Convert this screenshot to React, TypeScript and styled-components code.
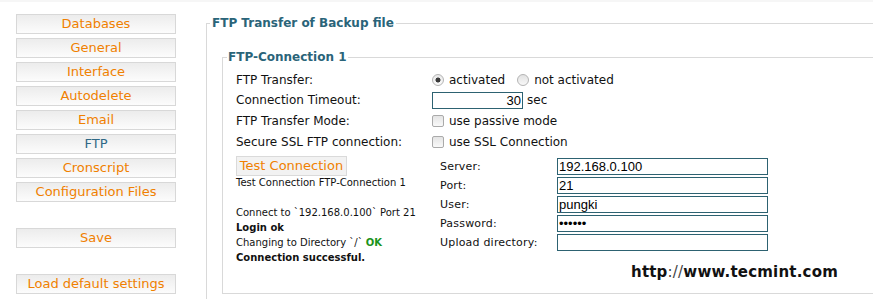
import React from "react";
import styled, { createGlobalStyle } from "styled-components";

const GlobalStyle = createGlobalStyle`
  html, body {
    margin: 0;
    padding: 0;
    background: #fff;
  }
  body {
    font-family: "DejaVu Sans", Verdana, sans-serif;
    color: #111;
  }
`;

const menuItems = [
  "Databases",
  "General",
  "Interface",
  "Autodelete",
  "Email",
  "FTP",
  "Cronscript",
  "Configuration Files",
];

function App() {
  return (
    <>
      <GlobalStyle />
      <Page>
        <Sidebar>
          {menuItems.map((item) => (
            <MenuButton key={item} $active={item === "FTP"}>
              {item}
            </MenuButton>
          ))}
          <MenuButton $spaced>Save</MenuButton>
          <MenuButton $spaced>Load default settings</MenuButton>
        </Sidebar>

        <Main>
          <OuterFieldset>
            <OuterLegend>FTP Transfer of Backup file</OuterLegend>
            <InnerFieldset>
              <InnerLegend>FTP-Connection 1</InnerLegend>

              <SettingsGrid>
                <FieldLabel>FTP Transfer:</FieldLabel>
                <FieldValue>
                  <Radio $checked />
                  <OptionText>activated</OptionText>
                  <Radio $spaced />
                  <OptionText>not activated</OptionText>
                </FieldValue>

                <FieldLabel>Connection Timeout:</FieldLabel>
                <FieldValue>
                  <TimeoutInput defaultValue="30" />
                  <Unit>sec</Unit>
                </FieldValue>

                <FieldLabel>FTP Transfer Mode:</FieldLabel>
                <FieldValue>
                  <Checkbox />
                  <OptionText>use passive mode</OptionText>
                </FieldValue>

                <FieldLabel>Secure SSL FTP connection:</FieldLabel>
                <FieldValue>
                  <Checkbox />
                  <OptionText>use SSL Connection</OptionText>
                </FieldValue>
              </SettingsGrid>

              <Lower>
                <TestColumn>
                  <TestButton>Test Connection</TestButton>
                  <TestCaption>Test Connection FTP-Connection 1</TestCaption>
                  <Log>
                    <LogLine>Connect to `192.168.0.100` Port 21</LogLine>
                    <LogLine $bold>Login ok</LogLine>
                    <LogLine>
                      Changing to Directory `/` <Ok>OK</Ok>
                    </LogLine>
                    <LogLine $bold>Connection successful.</LogLine>
                  </Log>
                </TestColumn>

                <ServerGrid>
                  <ServerLabel>Server:</ServerLabel>
                  <TextInput defaultValue="192.168.0.100" />
                  <ServerLabel>Port:</ServerLabel>
                  <TextInput defaultValue="21" />
                  <ServerLabel>User:</ServerLabel>
                  <TextInput defaultValue="pungki" />
                  <ServerLabel>Password:</ServerLabel>
                  <TextInput type="password" defaultValue="pungki" />
                  <ServerLabel>Upload directory:</ServerLabel>
                  <TextInput defaultValue="" />
                </ServerGrid>
              </Lower>
            </InnerFieldset>
          </OuterFieldset>
        </Main>

        <Watermark>
          http<Thin>://</Thin>www.tecmint.com
        </Watermark>
      </Page>
    </>
  );
}

const Page = styled.div`
  position: relative;
  display: flex;
  align-items: flex-start;
  width: 873px;
  height: 299px;
  overflow: hidden;
  border-top: 2px solid #f6f6f6;
  box-sizing: border-box;
`;

const Sidebar = styled.nav`
  display: flex;
  flex-direction: column;
  gap: 4px;
  width: 160px;
  padding: 12px 0 0 16px;
  flex-shrink: 0;
`;

const MenuButton = styled.button<{ $active?: boolean; $spaced?: boolean }>`
  display: block;
  width: 160px;
  height: 20px;
  box-sizing: border-box;
  margin: ${(p) => (p.$spaced ? "22px" : "0")} 0 0;
  padding: 0;
  border: 1px solid #d8d8d8;
  background: linear-gradient(#ececec, #fcfcfc);
  font-family: "DejaVu Sans", Verdana, sans-serif;
  font-size: 13px;
  line-height: 18px;
  text-align: center;
  color: ${(p) => (p.$active ? "#2f6886" : "#f08000")};
`;

const Main = styled.main`
  flex: 1;
  margin-left: 30px;
  padding-top: 13px;
`;

const OuterFieldset = styled.fieldset`
  margin: 0 -40px 0 0;
  padding: 0 0 20px 3px;
  border: 1px solid #d9d9d9;
  min-width: 0;
`;

const OuterLegend = styled.legend`
  padding: 0 2px;
  font-size: 12px;
  line-height: 17px;
  font-weight: bold;
  color: #2a6479;
`;

const InnerFieldset = styled.fieldset`
  margin: 17px 0 0 12px;
  padding: 4px 0 28px 13px;
  border: 1px solid #d9d9d9;
  min-width: 0;
`;

const InnerLegend = styled.legend`
  margin-left: -9px;
  padding: 0 1px;
  font-size: 12px;
  line-height: 17px;
  font-weight: bold;
  color: #2a6479;
`;

const SettingsGrid = styled.div`
  display: grid;
  grid-template-columns: 196px auto;
  grid-template-rows: 20px 20px 21px 22px;
  align-items: center;
  font-size: 12px;
`;

const FieldLabel = styled.div`
  color: #111;
`;

const FieldValue = styled.div`
  display: flex;
  align-items: center;
  color: #111;
`;

const Radio = styled.span<{ $checked?: boolean; $spaced?: boolean }>`
  width: 12px;
  height: 12px;
  box-sizing: border-box;
  margin-left: ${(p) => (p.$spaced ? "12px" : "0")};
  border-radius: 50%;
  border: 1px solid #b4b4b4;
  background: ${(p) =>
    p.$checked
      ? "radial-gradient(circle, #3a3a3a 0 2.2px, transparent 2.8px), linear-gradient(#e8e8e8, #fafafa)"
      : "linear-gradient(#e2e2e2, #f8f8f8)"};
`;

const Checkbox = styled.span`
  width: 12px;
  height: 12px;
  box-sizing: border-box;
  border-radius: 2px;
  border: 1px solid #aaa;
  background: linear-gradient(#e4e4e4, #f9f9f9);
`;

const OptionText = styled.span`
  margin-left: 5px;
`;

const TimeoutInput = styled.input`
  width: 91px;
  height: 17px;
  box-sizing: border-box;
  padding: 0 1px 0 0;
  border: 1px solid #2d6271;
  font-family: "Liberation Sans", Arial, sans-serif;
  font-size: 13px;
  text-align: right;
  color: #000;
  outline: none;
`;

const Unit = styled.span`
  margin-left: 4px;
`;

const Lower = styled.div`
  display: flex;
  margin-top: 3px;
`;

const TestColumn = styled.div`
  width: 204px;
  flex-shrink: 0;
`;

const TestButton = styled.button`
  display: block;
  width: 111px;
  height: 20px;
  box-sizing: border-box;
  padding: 0;
  border: 1px solid #dadada;
  background: #f2f2f2;
  font-family: "DejaVu Sans", Verdana, sans-serif;
  font-size: 13px;
  line-height: 18px;
  color: #f08000;
`;

const TestCaption = styled.div`
  font-size: 10px;
  line-height: 14px;
  color: #111;
`;

const Log = styled.div`
  margin-top: 15px;
`;

const LogLine = styled.div<{ $bold?: boolean }>`
  font-size: 10px;
  line-height: 15px;
  font-weight: ${(p) => (p.$bold ? "bold" : "normal")};
  color: #111;
`;

const Ok = styled.span`
  font-weight: bold;
  color: #1b941b;
`;

const ServerGrid = styled.div`
  display: grid;
  grid-template-columns: 117px 211px;
  grid-auto-rows: 17px;
  row-gap: 2px;
  align-items: center;
  margin-top: 2px;
`;

const ServerLabel = styled.div`
  font-size: 11px;
  letter-spacing: 0.2px;
  color: #111;
`;

const TextInput = styled.input`
  width: 211px;
  height: 17px;
  box-sizing: border-box;
  padding: 0 1px;
  border: 1px solid #2d6271;
  font-family: "Liberation Sans", Arial, sans-serif;
  font-size: 13px;
  color: #000;
  outline: none;
`;

const Watermark = styled.div`
  position: absolute;
  left: 631px;
  top: 261px;
  font-family: "DejaVu Sans", Verdana, sans-serif;
  font-size: 15px;
  font-weight: bold;
  letter-spacing: 0.2px;
  color: #111;
`;

const Thin = styled.span`
  font-weight: normal;
  color: #444;
`;

export default App;
